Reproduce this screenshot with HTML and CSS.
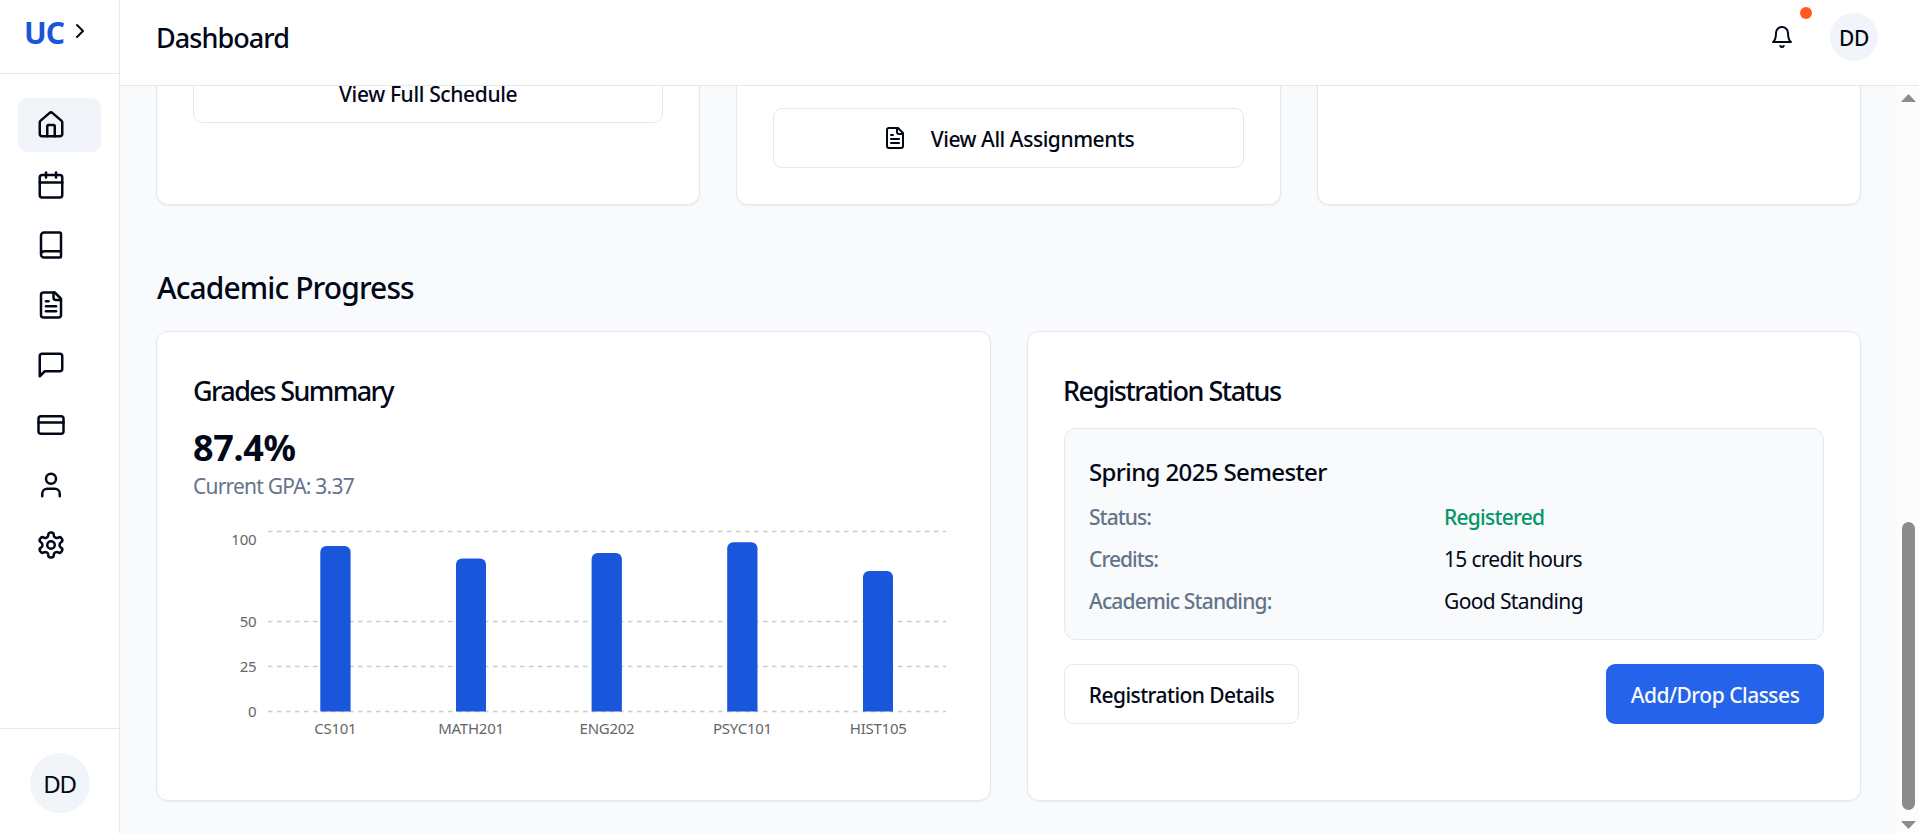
FILE: index.html
```html
<!DOCTYPE html>
<html lang="en">
<head>
<meta charset="utf-8">
<title>Dashboard</title>
<link rel="stylesheet" href="styles.css">
</head>
<body>
<svg width="0" height="0" class="defs">
  <symbol id="file" viewBox="0 0 24 24"><path d="M15 2H6a2 2 0 0 0-2 2v16a2 2 0 0 0 2 2h12a2 2 0 0 0 2-2V7Z"/><path d="M14 2v4a2 2 0 0 0 2 2h4"/><path d="M10 9H8"/><path d="M16 13H8"/><path d="M16 17H8"/></symbol>
</svg>
<div class="app">
  <aside class="sidebar">
    <div class="brand">
      <span class="logo">UC</span>
      <svg class="icon icon-sm" viewBox="0 0 24 24"><path d="m9 18 6-6-6-6"/></svg>
    </div>
    <nav class="nav">
      <a class="nav-item active"><svg class="icon" viewBox="0 0 24 24"><path d="M15 21v-8a1 1 0 0 0-1-1h-4a1 1 0 0 0-1 1v8"/><path d="M3 10a2 2 0 0 1 .709-1.528l7-5.999a2 2 0 0 1 2.582 0l7 5.999A2 2 0 0 1 21 10v9a2 2 0 0 1-2 2H5a2 2 0 0 1-2-2z"/></svg></a>
      <a class="nav-item"><svg class="icon" viewBox="0 0 24 24"><path d="M8 2v4"/><path d="M16 2v4"/><rect width="18" height="18" x="3" y="4" rx="2"/><path d="M3 10h18"/></svg></a>
      <a class="nav-item"><svg class="icon" viewBox="0 0 24 24"><path d="M4 19.5v-15A2.5 2.5 0 0 1 6.500 2H19a1 1 0 0 1 1 1v18a1 1 0 0 1-1 1H6.500a1 1 0 0 1 0-5H20"/></svg></a>
      <a class="nav-item"><svg class="icon" viewBox="0 0 24 24"><use href="#file"/></svg></a>
      <a class="nav-item"><svg class="icon" viewBox="0 0 24 24"><path d="M21 15a2 2 0 0 1-2 2H7l-4 4V5a2 2 0 0 1 2-2h14a2 2 0 0 1 2 2z"/></svg></a>
      <a class="nav-item"><svg class="icon" viewBox="0 0 24 24"><rect width="20" height="14" x="2" y="5" rx="2"/><path d="M2 10h20"/></svg></a>
      <a class="nav-item"><svg class="icon" viewBox="0 0 24 24"><path d="M19 21v-2a4 4 0 0 0-4-4H9a4 4 0 0 0-4 4v2"/><circle cx="12" cy="7" r="4"/></svg></a>
      <a class="nav-item"><svg class="icon" viewBox="0 0 24 24"><path d="M12.220 2h-.44a2 2 0 0 0-2 2v.18a2 2 0 0 1-1 1.730l-.43.25a2 2 0 0 1-2 0l-.15-.08a2 2 0 0 0-2.730.73l-.22.38a2 2 0 0 0 .73 2.730l.15.1a2 2 0 0 1 1 1.720v.51a2 2 0 0 1-1 1.740l-.15.09a2 2 0 0 0-.73 2.730l.22.38a2 2 0 0 0 2.730.73l.15-.08a2 2 0 0 1 2 0l.43.25a2 2 0 0 1 1 1.730V20a2 2 0 0 0 2 2h.44a2 2 0 0 0 2-2v-.18a2 2 0 0 1 1-1.730l.43-.25a2 2 0 0 1 2 0l.15.08a2 2 0 0 0 2.730-.73l.22-.39a2 2 0 0 0-.73-2.730l-.15-.08a2 2 0 0 1-1-1.740v-.5a2 2 0 0 1 1-1.740l.15-.09a2 2 0 0 0 .73-2.730l-.22-.38a2 2 0 0 0-2.730-.73l-.15.08a2 2 0 0 1-2 0l-.43-.25a2 2 0 0 1-1-1.730V4a2 2 0 0 0-2-2z"/><circle cx="12" cy="12" r="3"/></svg></a>
    </nav>
    <div class="account"><span class="avatar avatar-lg">DD</span></div>
  </aside>

  <div class="main">
    <header class="topbar">
      <h1>Dashboard</h1>
      <div class="actions">
        <div class="bell">
          <svg class="icon icon-sm" viewBox="0 0 24 24"><path d="M6 8a6 6 0 0 1 12 0c0 7 3 9 3 9H3s3-2 3-9"/><path d="M10.300 21a1.940 1.940 0 0 0 3.400 0"/></svg>
          <span class="dot"></span>
        </div>
        <span class="avatar">DD</span>
      </div>
    </header>

    <div class="viewport">
      <main class="content">
        <section class="overview">
          <div class="card cut"><div class="btn cut-btn"><span class="t-schedule">View Full Schedule</span></div></div>
          <div class="card cut"><div class="btn wide-btn"><svg class="icon icon-sm" viewBox="0 0 24 24"><use href="#file"/></svg><span class="t-assign">View All Assignments</span></div></div>
          <div class="card cut"></div>
        </section>

        <h2>Academic Progress</h2>

        <section class="progress">
          <div class="card">
            <h3 class="t-grades">Grades Summary</h3>
            <div class="score">87.4%</div>
            <div class="gpa">Current GPA: 3.37</div>
            <svg class="chart" width="761" height="230" viewBox="193 515 761 230">
              <g class="grid">
                <path d="M268 531.500H946"/><path d="M268 621.500H946"/><path d="M268 666.500H946"/><path d="M268 711.500H946"/>
              </g>
              <g class="bars">
                <path d="M320.300 711.500v-159.600a6 6 0 0 1 6-6h18.300a6 6 0 0 1 6 6v159.600z"/>
                <path d="M456 711.500v-147a6 6 0 0 1 6-6h18a6 6 0 0 1 6 6v147z"/>
                <path d="M591.600 711.500v-152.400a6 6 0 0 1 6-6h18.300a6 6 0 0 1 6 6v152.400z"/>
                <path d="M727.200 711.500v-163.200a6 6 0 0 1 6-6h18.300a6 6 0 0 1 6 6v163.200z"/>
                <path d="M863 711.500v-134.400a6 6 0 0 1 6-6h18a6 6 0 0 1 6 6v134.400z"/>
              </g>
              <g class="ticks ticks-y">
                <text x="256.500" y="545">100</text><text x="256.500" y="627">50</text><text x="256.500" y="672">25</text><text x="256.500" y="717">0</text>
              </g>
              <g class="ticks ticks-x">
                <text x="335.300" y="734">CS101</text><text x="471" y="734">MATH201</text><text x="607" y="734">ENG202</text><text x="742.400" y="734">PSYC101</text><text x="878.200" y="734">HIST105</text>
              </g>
            </svg>
          </div>

          <div class="card">
            <h3 class="t-reg">Registration Status</h3>
            <div class="panel">
              <h4>Spring 2025 Semester</h4>
              <dl>
                <dt>Status:</dt><dd class="ok">Registered</dd>
                <dt>Credits:</dt><dd class="credit">15 credit hours</dd>
                <dt class="standing">Academic Standing:</dt><dd>Good Standing</dd>
              </dl>
            </div>
            <div class="buttons">
              <div class="btn details"><span>Registration Details</span></div>
              <div class="btn primary"><span>Add/Drop Classes</span></div>
            </div>
          </div>
        </section>
      </main>
      <div class="scrollbar">
        <svg width="15" height="8" viewBox="0 0 15 8"><path d="M7.500 0 15 8H0z"/></svg>
        <span class="thumb"></span>
        <svg width="15" height="8" viewBox="0 0 15 8"><path d="M7.500 8 15 0H0z"/></svg>
      </div>
    </div>
  </div>
</div>
</body>
</html>
```
FILE: styles.css
```css
* { box-sizing: border-box; }
body {
  margin: 0;
  font-family: "Noto Sans", "Open Sans", sans-serif;
  font-size: 21px;
  line-height: 30px;
  color: #020817;
  background: #f8fafc;
}
h1, h2, h3, h4, dl, dd { margin: 0; font-weight: 500; }
.defs { display: none; }
.app { display: flex; height: 833px; overflow: hidden; }

.icon {
  display: block;
  width: 30px;
  height: 30px;
  flex: none;
  fill: none;
  stroke: #020817;
  stroke-width: 2;
  stroke-linecap: round;
  stroke-linejoin: round;
}
.icon-sm { width: 24px; height: 24px; }

.sidebar {
  display: flex;
  flex-direction: column;
  width: 120px;
  flex: none;
  background: #fff;
  border-right: 1px solid #e2e8f0;
}
.brand {
  display: flex;
  align-items: flex-start;
  height: 74px;
  padding: 10px 0 0 24px;
  border-bottom: 1px solid #e5e7eb;
}
.brand .icon { margin: 9px 0 0 3px; }
.logo {
  width: 41px;
  font-size: 30px;
  line-height: 45px;
  font-weight: 700;
  letter-spacing: -1px;
  color: #1a56db;
}
.nav { flex: 1; display: flex; flex-direction: column; gap: 6px; padding: 24px 18px 0; }
.nav-item { height: 54px; padding: 12px 18px; border-radius: 9px; }
.nav-item.active { background: #f1f5f9; }
.account {
  display: flex;
  justify-content: center;
  height: 105px;
  padding: 24px 0 0 1px;
  border-top: 1px solid #e5e7eb;
}
.avatar {
  display: flex;
  align-items: center;
  justify-content: center;
  width: 48px;
  height: 48px;
  border-radius: 50%;
  background: #f1f5f9;
  font-weight: 500;
  letter-spacing: -.35px;
  padding-top: 1px;
}
.avatar-lg { width: 60px; height: 60px; font-size: 24px; font-weight: 400; letter-spacing: -1.2px; padding: 2px 1px 0 0; }

.main { flex: 1; display: flex; flex-direction: column; min-width: 0; }
.topbar {
  display: flex;
  justify-content: space-between;
  height: 86px;
  flex: none;
  padding: 13px 41px 0 36px;
  background: #fff;
  border-bottom: 1px solid #e5e7eb;
}
h1 { font-size: 27px; line-height: 50px; letter-spacing: -.95px; }
.actions { display: flex; gap: 36px; }
.bell { position: relative; padding-top: 12px; }
.dot { position: absolute; left: 30px; top: -6px; width: 12px; height: 12px; border-radius: 50%; background: #ff5a1f; }

.viewport { display: flex; flex: 1; min-height: 0; }
.content { flex: 1; padding: 0 36px; min-width: 0; }
.card {
  background: #fff;
  border: 1px solid #e2e8f0;
  border-radius: 12px;
  box-shadow: 0 1px 2px rgba(0, 0, 0, .05);
}
.btn {
  display: flex;
  align-items: center;
  justify-content: center;
  height: 60px;
  border: 1px solid #e2e8f0;
  border-radius: 9px;
  background: #fff;
  font-weight: 500;
  white-space: nowrap;
}
.overview { display: grid; grid-template-columns: repeat(3, 1fr); gap: 36px; height: 119px; }
.cut { border-top: 0; border-radius: 0 0 12px 12px; padding: 0 36px; }
.cut-btn { height: 37px; border-top: 0; border-radius: 0 0 9px 9px; padding-bottom: 20px; }
.wide-btn { margin-top: 22px; gap: 24px; }
.wide-btn span { padding-top: 2px; }
.t-schedule { letter-spacing: -.36px; }
.t-assign { letter-spacing: -.45px; }

h2 { margin: 60px 0 21px 1px; font-size: 30px; line-height: 45px; letter-spacing: -.91px; }

.progress { display: grid; grid-template-columns: 1fr 1fr; gap: 36px; height: 470px; }
.progress .card { padding: 36px 36px 0; }
h3 { font-size: 27px; line-height: 41px; margin-top: 2px; white-space: nowrap; }
.t-grades { letter-spacing: -1.6px; }
.t-reg { letter-spacing: -1.46px; margin-left: -1px; }
.score { margin-top: 10px; font-size: 36px; line-height: 54px; font-weight: 700; letter-spacing: -.35px; }
.gpa { margin-top: -4px; letter-spacing: -.78px; color: #64748b; }
.chart { display: block; margin-top: 14px; }
.grid { stroke: #ccc; stroke-width: 1.5; stroke-dasharray: 4.500 4.500; }
.bars { fill: #1a56db; }
.ticks { font-size: 15px; fill: #666; }
.ticks-y { text-anchor: end; letter-spacing: -.2px; }
.ticks-x { text-anchor: middle; letter-spacing: -.25px; }

.panel {
  height: 212px;
  margin-top: 17px;
  padding: 25px 24px 0;
  border: 1px solid #e2e8f0;
  border-radius: 12px;
  background: #f8fafc;
}
h4 { font-size: 24px; line-height: 36px; letter-spacing: -.63px; }
dl { display: grid; grid-template-columns: 1fr 1fr; row-gap: 12px; margin-top: 12px; }
dt { color: #64748b; letter-spacing: -.95px; }
dd { font-weight: 400; letter-spacing: -.63px; }
.standing { letter-spacing: -.85px; }
.credit { letter-spacing: -.7px; }
.ok { font-weight: 500; letter-spacing: -.76px; color: #059669; }
.buttons { display: flex; justify-content: space-between; margin-top: 24px; }
.buttons span { padding-top: 2px; }
.details { width: 235px; letter-spacing: -.58px; }
.primary { width: 218px; border: 0; background: #2563eb; color: #f8fafc; letter-spacing: -.5px; }

.scrollbar {
  display: flex;
  flex-direction: column;
  align-items: center;
  width: 22px;
  flex: none;
  padding: 8px 0 4px;
  background: #fcfcfc;
}
.scrollbar svg { display: block; fill: #8b8b8b; }
.thumb { width: 13px; height: 288px; margin: auto 0 11px; border-radius: 7px; background: #8b8b8b; }
```
